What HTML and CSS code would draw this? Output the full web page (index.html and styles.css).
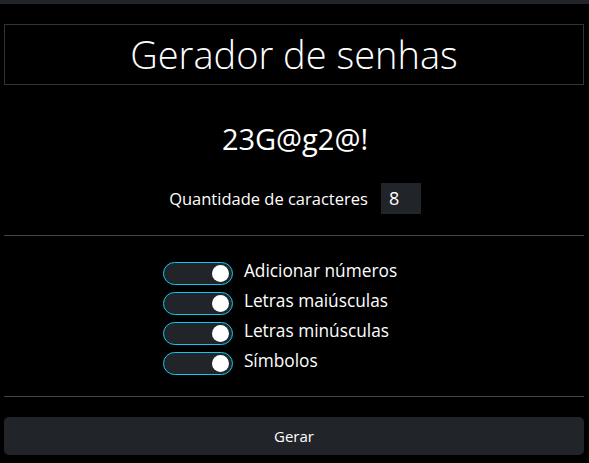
FILE: index.html
```html
<!DOCTYPE html>
<html lang="pt-BR">
<head>
<meta charset="utf-8">
<title>Gerador de senhas</title>
<link rel="stylesheet" href="styles.css">
</head>
<body>
<div class="topbar"></div>
<main class="app">
  <h1 class="title">Gerador de senhas</h1>
  <div class="password">23G@g2@!</div>
  <div class="length-row">
    <label class="length-label" for="len">Quantidade de caracteres</label>
    <div class="length-input" id="len">8</div>
  </div>
  <hr class="divider">
  <div class="options">
    <div class="option"><span class="switch"><span class="knob"></span></span><span class="option-label">Adicionar números</span></div>
    <div class="option"><span class="switch"><span class="knob"></span></span><span class="option-label">Letras maiúsculas</span></div>
    <div class="option"><span class="switch"><span class="knob"></span></span><span class="option-label">Letras minúsculas</span></div>
    <div class="option"><span class="switch"><span class="knob"></span></span><span class="option-label">Símbolos</span></div>
  </div>
  <hr class="divider divider-bottom">
  <button class="generate">Gerar</button>
</main>
</body>
</html>
```
FILE: styles.css
```css
* { box-sizing: border-box; }
html, body { margin: 0; padding: 0; }
body {
  background: #000;
  color: #fff;
  font-family: "Open Sans", "Noto Sans", sans-serif;
  width: 589px;
  height: 463px;
  overflow: hidden;
}
.topbar { height: 4px; background: #212529; }
.app {
  padding: 20px 5px 0 4px;
  display: flex;
  flex-direction: column;
}
.title {
  margin: 0;
  height: 61px;
  border: 1px solid #333;
  font-weight: 300;
  font-size: 38px;
  line-height: 58px;
  text-align: center;
}
.password {
  margin-top: 36px;
  text-align: center;
  font-size: 29px;
  line-height: 36px;
  padding-left: 2px;
}
.length-row {
  margin-top: 26px;
  display: flex;
  justify-content: center;
  align-items: center;
  gap: 13px;
  padding-left: 2px;
}
.length-label { font-size: 16.5px; }
.length-input {
  width: 40px;
  height: 31px;
  background: #212529;
  font-size: 18px;
  line-height: 31px;
  padding-left: 8px;
}
.divider {
  margin: 21px 0 0;
  border: 0;
  border-top: 1px solid #444;
  height: 0;
}
.options {
  margin-top: 26px;
  align-self: center;
  display: flex;
  flex-direction: column;
  gap: 7px;
  padding-right: 28px;
}
.option {
  display: flex;
  align-items: center;
  gap: 11px;
  height: 23px;
}
.switch {
  flex: none;
  width: 70px;
  height: 23px;
  border: 1.5px solid #0dcaf0;
  border-radius: 12px;
  background: #212529;
  display: flex;
  justify-content: flex-end;
  align-items: center;
  padding-right: 3px;
}
.knob {
  width: 17px;
  height: 17px;
  border-radius: 50%;
  background: #fff;
}
.option-label {
  font-size: 17.3px;
  line-height: 20px;
  margin-top: -6px;
  white-space: nowrap;
}
.divider-bottom { margin-top: 21px; }
.generate {
  margin-top: 20px;
  height: 38px;
  background: #212529;
  border: 0;
  border-radius: 5px;
  color: #fff;
  font-family: inherit;
  font-size: 15px;
}
```
